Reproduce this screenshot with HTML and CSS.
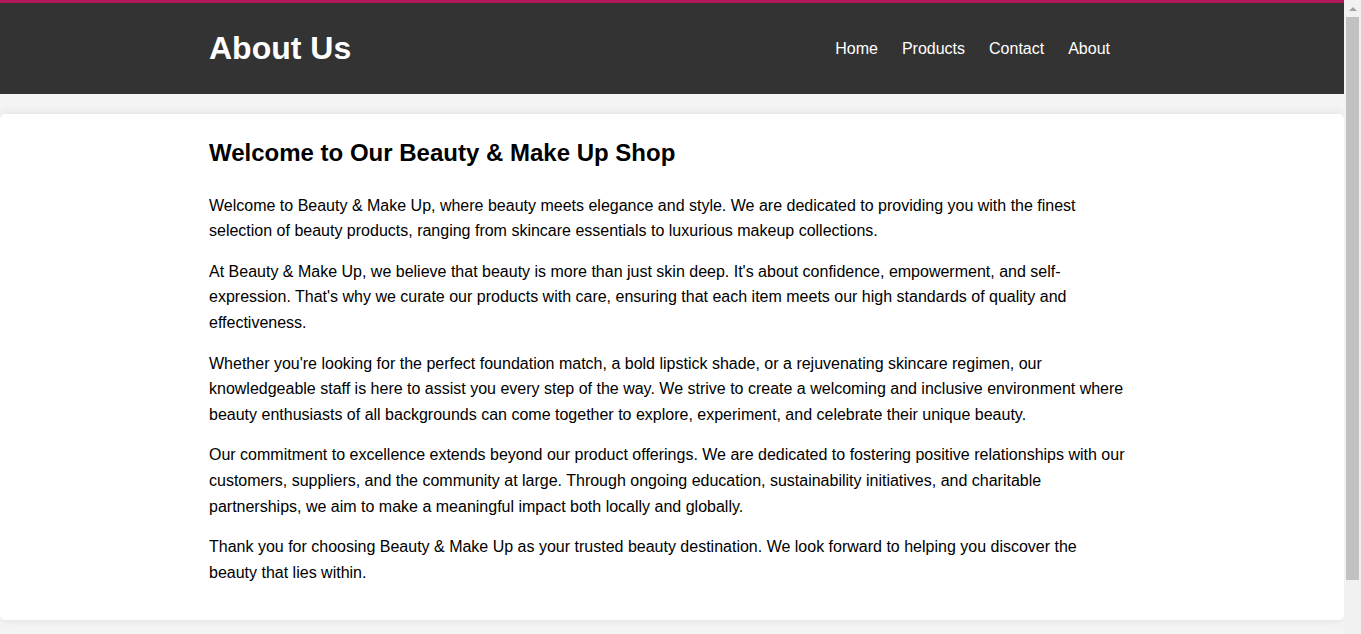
FILE: index.html
```html
<!DOCTYPE html>
<html lang="en">
<head>
<meta charset="UTF-8">
<title>About Us</title>
<link rel="stylesheet" href="styles.css">
</head>
<body>
<header class="site-header">
  <div class="container header-inner">
    <h1 class="page-title">About Us</h1>
    <nav class="main-nav">
      <a href="#">Home</a>
      <a href="#">Products</a>
      <a href="#">Contact</a>
      <a href="#">About</a>
    </nav>
  </div>
</header>
<main class="about">
  <div class="container">
    <h2 class="about-title">Welcome to Our Beauty &amp; Make Up Shop</h2>
    <p>Welcome to Beauty &amp; Make Up, where beauty meets elegance and style. We are dedicated to providing you with the finest selection of beauty products, ranging from skincare essentials to luxurious makeup collections.</p>
    <p>At Beauty &amp; Make Up, we believe that beauty is more than just skin deep. It's about confidence, empowerment, and self-expression. That's why we curate our products with care, ensuring that each item meets our high standards of quality and effectiveness.</p>
    <p>Whether you're looking for the perfect foundation match, a bold lipstick shade, or a rejuvenating skincare regimen, our knowledgeable staff is here to assist you every step of the way. We strive to create a welcoming and inclusive environment where beauty enthusiasts of all backgrounds can come together to explore, experiment, and celebrate their unique beauty.</p>
    <p>Our commitment to excellence extends beyond our product offerings. We are dedicated to fostering positive relationships with our customers, suppliers, and the community at large. Through ongoing education, sustainability initiatives, and charitable partnerships, we aim to make a meaningful impact both locally and globally.</p>
    <p>Thank you for choosing Beauty &amp; Make Up as your trusted beauty destination. We look forward to helping you discover the beauty that lies within.</p>
  </div>
</main>
<div class="fake-scrollbar" aria-hidden="true">
  <div class="scroll-arrow"></div>
  <div class="scroll-thumb"></div>
</div>
</body>
</html>
```

FILE: styles.css
```css
html, body {
  margin: 0;
  padding: 0;
}

body {
  font-family: "Liberation Sans", Arial, sans-serif;
  line-height: 1.6;
  background: #f4f4f4;
  color: #000;
  border-top: 3px solid #b0185c;
  margin-right: 17px;
  padding-bottom: 36px;
}

.container {
  width: 918px;
  padding-right: 8px;
  margin: 0 auto;
}

.site-header {
  background: #333;
  color: #fff;
  padding: 20px 0;
}

.header-inner {
  display: flex;
  align-items: center;
  justify-content: space-between;
}

.page-title {
  margin: 0;
  font-size: 32px;
  font-weight: bold;
}

.main-nav {
  display: flex;
  margin-right: 5px;
}

.main-nav a {
  color: #fff;
  text-decoration: none;
  font-size: 16px;
  padding: 0 12px;
}

.about {
  background: #fff;
  margin: 20px 0;
  padding: 20px 0;
  border-radius: 5px;
  box-shadow: 0 0 10px rgba(0, 0, 0, 0.1);
}

.about-title {
  margin: 0 0 20px;
  font-size: 24px;
}

.about p {
  margin: 15px 0;
  font-size: 16px;
}

.fake-scrollbar {
  position: fixed;
  top: 0;
  right: 0;
  width: 17px;
  height: 100%;
  background: #f1f1f1;
}

.scroll-arrow {
  width: 0;
  height: 0;
  margin: 7px auto 0;
  border-left: 4px solid transparent;
  border-right: 4px solid transparent;
  border-bottom: 4px solid #a3a3a3;
}

.scroll-thumb {
  position: absolute;
  top: 17px;
  left: 2px;
  width: 13px;
  height: 563px;
  background: #c1c1c1;
}
```
